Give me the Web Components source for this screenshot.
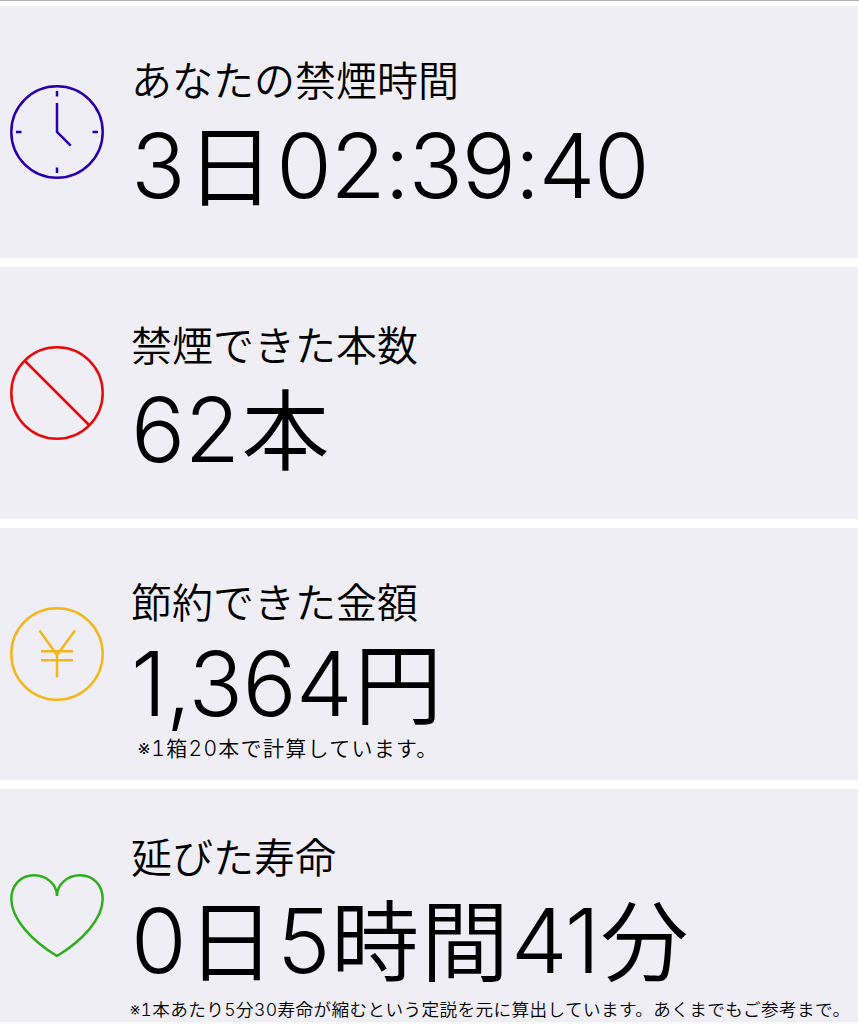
<!DOCTYPE html>
<html lang="ja">
<head>
<meta charset="UTF-8">
<title>禁煙時間</title>
<style>
    html,body{
        margin: 0;
        height: 100%;
        overflow: hidden;
        background: #fff;
    }
</style>
</head>
<body>
<quit-board>
    <stat-card icon="clock" style="--label-top: 48px; --value-top: 9px; --spacing: -1.3px">
        <span slot="label">あなたの禁煙時間</span>
        3<stat-unit>日</stat-unit>02:39:40
    </stat-card>
    <stat-card icon="ban" style="--label-top: 52px; --value-top: 8px">
        <span slot="label">禁煙できた本数</span>
        62<stat-unit>本</stat-unit>
    </stat-card>
    <stat-card icon="yen" style="--label-top: 48px; --value-top: 4.500px">
        <span slot="label">節約できた金額</span>
        1,364<stat-unit>円</stat-unit>
        <stat-note slot="note" style="--size: 21px; --left: 7px; --spacing: 1.300px; --top: -3px">※1箱20本で計算しています。</stat-note>
    </stat-card>
    <stat-card icon="heart" style="--label-top: 42px; --value-top: 6.500px; --spacing: -1.500px">
        <span slot="label">延びた寿命</span>
        0<stat-unit>日</stat-unit>5<stat-unit>時間</stat-unit>41<stat-unit>分</stat-unit>
        <stat-note slot="note" style="--size: 17.6px; --left: -1px; --spacing: 0.400px; --top: 1px">※1本あたり5分30寿命が縮むという定説を元に算出しています。あくまでもご参考まで。</stat-note>
    </stat-card>
</quit-board>

<script>
const icons = {
    clock: {
        color: '#2a00ad',
        shape: `
            <circle cx="47" cy="47" r="45.7"/>
            <path d="M47 6v5.5M47 82.500v5.500M6 47h5.500M82.500 47h5.500M47 18v29l13.700 13.700"/>
        `
    },
    ban: {
        color: '#e60a0a',
        shape: `
            <circle cx="47" cy="47" r="45.7"/>
            <path d="M15 15l64 64"/>
        `
    },
    yen: {
        color: '#f2b71c',
        shape: `
            <circle cx="47" cy="47" r="45.7"/>
            <path d="M29.500 23.500L47 48L65 23.500M47 48v22.500M31 44.300h32M31 53.200h32"/>
        `
    },
    heart: {
        color: '#2fae1c',
        shape: `
            <path d="M47 28C47 16 36 7.300 24 7.300C11 7.300 1.300 17 1.300 31C1.300 51 22 73 47 88C72 73 92.700 51 92.700 31C92.700 17 83 7.300 70 7.300C58 7.300 47 16 47 28Z"/>
        `
    }
}

class QuitBoard extends HTMLElement{
    constructor(){
        super()
        this.attachShadow({mode: 'open'})
    }

    getTemplate(){
        const board = document.createElement('template')
        board.innerHTML = `
            <style>
                :host{
                    display: flex;
                    flex-direction: column;
                    gap: 9px;
                    box-sizing: border-box;
                    height: 100%;
                    overflow: hidden;
                    padding: 5px 1px 0 0;
                    border-top: 1px solid #b2b2b2;
                    border-bottom: 2px solid #fafafc;
                    color: #000;
                    font-family: Inter, 'Noto Sans CJK JP', sans-serif;
                    font-weight: 300;
                    text-autospace: no-autospace;
                }
            </style>
            <slot></slot>
        `
        return board
    }

    connectedCallback(){
        this.shadowRoot.appendChild(this.getTemplate().content.cloneNode(true))
    }
}

class StatCard extends HTMLElement{
    constructor(){
        super()
        this.attachShadow({mode: 'open'})
    }

    getStyles(){
        return `
            <style>
                :host{
                    display: flex;
                    flex: none;
                    align-items: center;
                    gap: 27px;
                    box-sizing: border-box;
                    height: 252px;
                    padding-left: 10px;
                    background: #efeef5;
                }
                svg{
                    flex: none;
                    width: 94px;
                    height: 94px;
                    fill: none;
                    stroke-width: 2.500;
                }
                .text{
                    align-self: stretch;
                    display: flex;
                    flex-direction: column;
                    white-space: nowrap;
                }
                .label{
                    margin-top: var(--label-top);
                    font-family: 'Noto Sans CJK JP', sans-serif;
                    font-size: 41px;
                    font-weight: 350;
                    line-height: 48px;
                }
                .value{
                    margin-top: var(--value-top);
                    font-size: 90px;
                    line-height: 110px;
                    height: 110px;
                    letter-spacing: var(--spacing, -0.500px);
                }
            </style>
        `
    }

    getTemplate(){
        const icon = icons[this.getAttribute('icon')]
        const card = document.createElement('template')
        card.innerHTML = `
            ${this.getStyles()}
            <svg viewBox="0 0 94 94" stroke="${icon.color}">${icon.shape}</svg>
            <div class="text">
                <div class="label"><slot name="label"></slot></div>
                <div class="value"><slot></slot></div>
                <slot name="note"></slot>
            </div>
        `
        return card
    }

    connectedCallback(){
        this.shadowRoot.appendChild(this.getTemplate().content.cloneNode(true))
    }
}

// kanji counter that follows a number
class StatUnit extends HTMLElement{
    constructor(){
        super()
        this.attachShadow({mode: 'open'})
        // no whitespace around the slot, it would show up as a gap in the number
        this.shadowRoot.innerHTML = `<style>
                :host{
                    margin-left: 2px;
                    font-family: 'Noto Sans CJK JP', sans-serif;
                    font-size: 88px;
                    font-weight: 350;
                    line-height: 1px;
                    letter-spacing: 2px;
                    vertical-align: -1px;
                }
            </style><slot></slot>`
    }
}

class StatNote extends HTMLElement{
    constructor(){
        super()
        this.attachShadow({mode: 'open'})
        this.shadowRoot.innerHTML = `
            <style>
                :host{
                    display: block;
                    margin: var(--top) 0 0 var(--left);
                    font-size: var(--size);
                    font-weight: 350;
                    font-variant-numeric: tabular-nums;
                    line-height: 26px;
                    letter-spacing: var(--spacing);
                }
            </style>
            <slot></slot>
        `
    }
}

customElements.define('quit-board', QuitBoard)
customElements.define('stat-card', StatCard)
customElements.define('stat-unit', StatUnit)
customElements.define('stat-note', StatNote)
</script>
</body>
</html>
